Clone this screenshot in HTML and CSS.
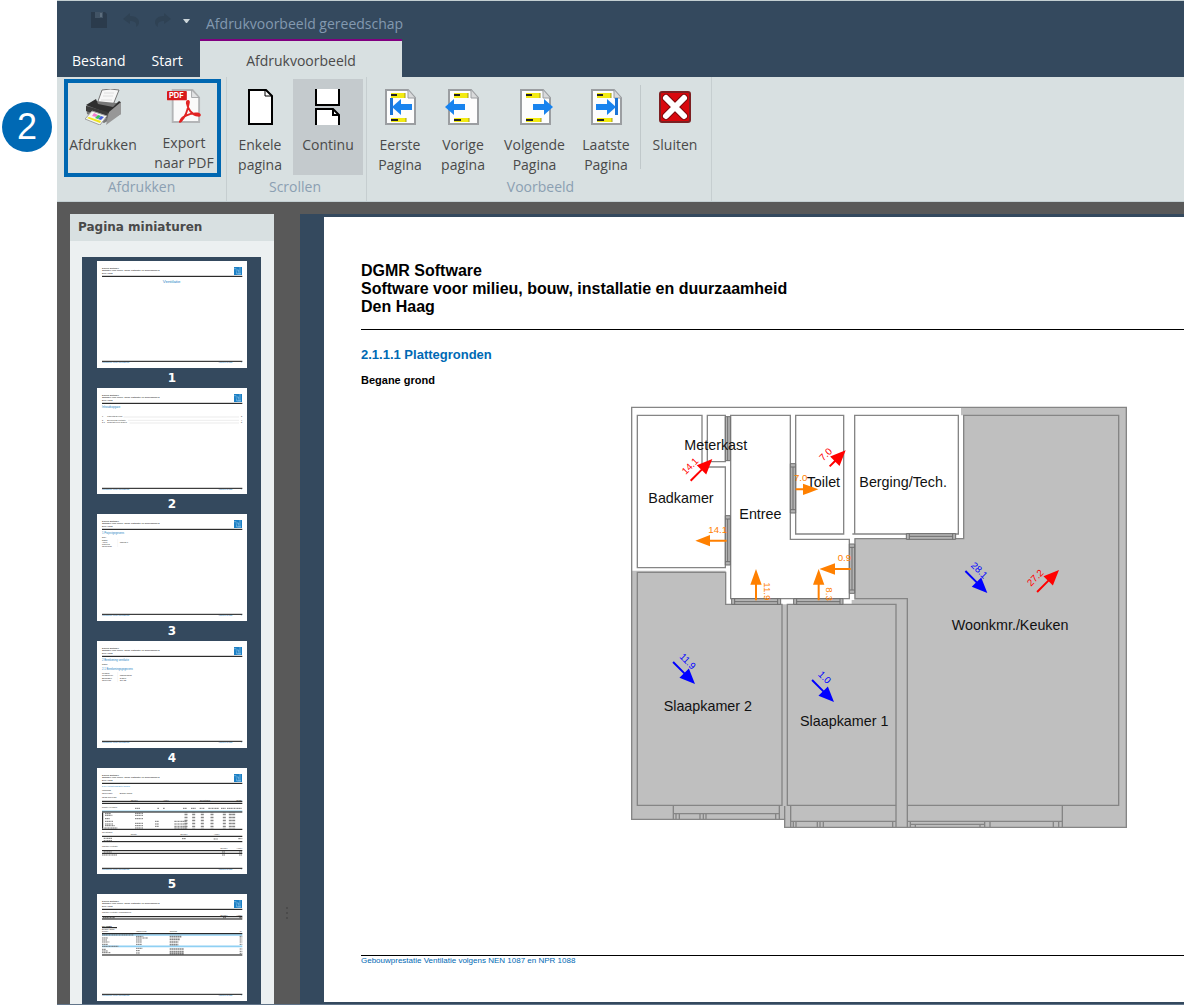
FILE: index.html
```html
<!DOCTYPE html>
<html lang="nl">
<head>
<meta charset="utf-8">
<meta name="viewport" content="width=device-width, initial-scale=1">
<title>Afdrukvoorbeeld</title>
<link rel="stylesheet" href="styles.css">
</head>
<body>
<svg class="defs" aria-hidden="true">
  <symbol id="logo" viewBox="0 0 24 24">
    <path fill="#1b7fc4" d="M0 0h24v24H0z"/>
    <path fill="none" stroke="#8fc6ea" stroke-width="2" d="M0 5h7M18 0v24M5 9h9v8M8 13v8h8M11 20h10"/>
  </symbol>
  <symbol id="sheet" viewBox="0 0 36 36">
    <path d="M5 1h22l7 8v26H5z" fill="#fdfdfd" stroke="#9b9ea1" stroke-width="2"/>
    <path d="M27 1v8h7" fill="#d9dadb" stroke="#9b9ea1"/>
    <path d="M10 4h14v5H10zM10 29h15v4H10z" fill="#f2ea12"/>
    <path d="M10 6h6M10 31h7" stroke="#222" stroke-width="2"/>
    <path d="M24 4v5M25 29v4" stroke="#a39b18" stroke-width="1"/>
  </symbol>
</svg>

<div class="stage">
  <aside class="step"><span class="step-badge">2</span></aside>

  <div class="app">
    <header class="titlebar">
      <div class="title-left">
        <div class="quick">
          <button type="button" aria-label="Opslaan"><svg width="16" height="16" viewBox="0 0 16 16"><path fill="#2b3b4c" d="M0 0h14l2 2v14H0z"/><path fill="#415365" d="M4 0h8v6H4z"/><path fill="#5d6e7e" d="M9 1h2v4H9z"/></svg></button>
          <button type="button" aria-label="Ongedaan maken"><svg width="16" height="16" viewBox="0 0 16 16"><path fill="#2f4254" d="M7 1v3c6 0 9 3 9 6 0 2-1 4-3 5 1-4-1-6-6-6v3L0 7z"/></svg></button>
          <button type="button" aria-label="Opnieuw"><svg width="16" height="16" viewBox="0 0 16 16"><path fill="#2f4254" d="M9 1v3c-6 0-9 3-9 6 0 2 1 4 3 5-1-4 1-6 6-6v3l7-5z"/></svg></button>
          <button type="button" class="quick-more" aria-label="Meer"><svg width="7" height="4" viewBox="0 0 7 4"><path fill="#cdd6da" d="M0 0h7L4 4H3z"/></svg></button>
        </div>
        <nav class="tabs">
          <button type="button">Bestand</button>
          <button type="button">Start</button>
        </nav>
      </div>
      <div class="context">
        <div class="context-title">Afdrukvoorbeeld gereedschap</div>
        <button type="button" class="context-tab">Afdrukvoorbeeld</button>
      </div>
    </header>

    <div class="ribbon">
      <section class="group group-print">
        <div class="marked">
          <button type="button" class="tool w70">
            <svg width="36" height="36" viewBox="0 0 36 36">
              <path d="M12 15 17 1q8-2 17 0l-6 15z" fill="#f7f7f7" stroke="#777"/>
              <path d="M19 4h10M18 7h10M16 11h11" stroke="#dedede"/>
              <path d="m1 17 10-5 20 2 6-1-1 12-17 9L2 25z" fill="#777"/>
              <path d="m1 16 10-6 2 5 15 3 6-6 3 2-12 11z" fill="#2f2f2f"/>
              <path d="m24 23 12-10v12L21 36z" fill="#979797"/>
              <path d="m1 17 22 6-1 6L1 22z" fill="#3b3b3b"/>
              <path d="m7 22 15 5-7 9L0 30z" fill="#f5f5f0" stroke="#a0a0a0"/>
              <path d="m2 29 13 5 1-2-12-4z" fill="#f0e51c"/>
              <path d="m9 24 4 2-2 2-4-1z" fill="#ef7fd0"/><path d="m13 26 3 1-3 3-3-1z" fill="#37c45a"/><path d="m16 27 3 1-3 3-3-1z" fill="#4a62dc"/>
            </svg>
            <span>Afdrukken</span>
          </button>
          <button type="button" class="tool w66">
            <svg width="36" height="36" viewBox="0 0 36 36">
              <path d="M6 1h21l7 8v26H6z" fill="#fafafa" stroke="#b3b5b7" stroke-width="2"/>
              <path d="M26 1v8h8z" fill="#e2e3e4" stroke="#a5a7a9"/>
              <rect x="0" y="2" width="21" height="10" rx="1" fill="#d81a1a"/>
              <text x="2" y="10" font-size="8" font-weight="700" fill="#fff" font-family="Inter, sans-serif">PDF</text>
              <path d="M14 34c1-4 9-9 19-8 3 1 2 3-1 2-6-1-10-7-11-13 0-3 3-3 2 0-1 7-4 15-8 19-1 1-2 1-1 0z" fill="none" stroke="#e12222" stroke-width="2"/>
            </svg>
            <span>Export naar PDF</span>
          </button>
        </div>
        <h2>Afdrukken</h2>
      </section>

      <section class="group group-scroll">
        <div class="tools">
          <button type="button" class="tool w66">
            <svg width="36" height="36" viewBox="0 0 36 36"><path d="M7 1h17l6 6v28H7z" fill="#fff" stroke="#000" stroke-width="2"/><path d="M23 1v6h6" fill="none" stroke="#000"/></svg>
            <span>Enkele pagina</span>
          </button>
          <button type="button" class="tool w70 active" aria-pressed="true">
            <svg width="36" height="36" viewBox="0 0 36 36"><path d="M6 0h23v16H6zM6 36V20h17l6 6v10z" fill="#fff"/><path d="M6 0v16h23V0M6 36V20h17l6 6v10M23 20v6h6" fill="none" stroke="#000" stroke-width="2"/></svg>
            <span>Continu</span>
          </button>
        </div>
        <h2>Scrollen</h2>
      </section>

      <section class="group group-view">
        <div class="tools">
          <button type="button" class="tool w60">
            <svg width="36" height="36" viewBox="0 0 36 36"><use href="#sheet" x="-1" width="36" height="36"/><path d="M8 9h3v17H8z" fill="#1b74d6"/><path d="m10 18 9-8v5h11v6H19v5z" fill="#1883ee"/></svg>
            <span>Eerste Pagina</span>
          </button>
          <button type="button" class="tool w66">
            <svg width="36" height="36" viewBox="0 0 36 36"><use href="#sheet" x="-1" width="36" height="36"/><path d="m0 18 9-8v5h11v6H9v5z" fill="#1883ee"/></svg>
            <span>Vorige pagina</span>
          </button>
          <button type="button" class="tool w77">
            <svg width="36" height="36" viewBox="0 0 36 36"><use href="#sheet" x="-1" width="36" height="36"/><path d="m36 18-9-8v5H16v6h11v5z" fill="#1883ee"/></svg>
            <span>Volgende Pagina</span>
          </button>
          <button type="button" class="tool w66">
            <svg width="36" height="36" viewBox="0 0 36 36"><use href="#sheet" x="-1" width="36" height="36"/><path d="M27 9h3v17h-3z" fill="#1b74d6"/><path d="m28 18-9-8v5H8v6h11v5z" fill="#1883ee"/></svg>
            <span>Laatste Pagina</span>
          </button>
          <span class="rule"></span>
          <button type="button" class="tool w66">
            <svg width="36" height="36" viewBox="0 0 36 36"><rect x="3" y="3" width="30" height="30" rx="2" fill="#d9080d" stroke="#7c2022" stroke-width="2"/><path d="m9 9 18 18M27 9 9 27" stroke="#7e0b0d" stroke-width="8" stroke-linecap="round"/><path d="m9 9 18 18M27 9 9 27" stroke="#fff" stroke-width="6" stroke-linecap="round"/></svg>
            <span>Sluiten</span>
          </button>
        </div>
        <h2>Voorbeeld</h2>
      </section>
    </div>

    <div class="workspace">
      <aside class="panel">
        <h2>Pagina miniaturen</h2>
        <ol class="thumbs">
          <li><svg viewBox="0 0 450 320">
            <g id="thumb-head">
              <g font-size="7" fill="#000">
                <text x="15" y="24">DGMR Software</text>
                <text x="15" y="31">Software voor milieu, bouw, installatie en duurzaamheid</text>
                <text x="15" y="38">Den Haag</text>
              </g>
              <use href="#logo" x="411" y="18" width="24" height="24"/>
              <path stroke="#000" stroke-width="3" d="M15 46h421"/>
            </g>
            <text x="224" y="66" text-anchor="middle" font-size="13" fill="#1b7fc4">Ventilatie</text>
            <g id="thumb-foot">
              <path stroke="#111" stroke-width="3" d="M15 301h421"/>
              <g font-size="4" fill="#0069b4">
                <text x="15" y="306">Gebouwprestatie Ventilatie volgens NEN 1087</text>
                <text x="364" y="306">Afgedrukt op 12-3-2021</text>
                <text x="432" y="306">1</text>
              </g>
            </g></svg><span>1</span></li>
          <li><svg viewBox="0 0 450 320"><use href="#thumb-head"/>
            <text x="15" y="60" font-size="8" fill="#1b7fc4">Inhoudsopgave</text>
            <g font-size="6" fill="#222"><text x="15" y="86">1</text><text x="31" y="86">Projectgegevens</text><text x="432" y="86">3</text>
            <text x="15" y="98">2</text><text x="31" y="98">Berekening ventilatie</text><text x="432" y="98">4</text>
            <text x="15" y="105">2.1</text><text x="31" y="105">Resultaten per gebied</text><text x="432" y="105">5</text></g>
            <path stroke="#aaa" stroke-dasharray="2 1" d="M80 87h346M94 97h332M98 105h328"/>
            <use href="#thumb-foot"/></svg><span>2</span></li>
          <li><svg viewBox="0 0 450 320"><use href="#thumb-head"/>
            <text x="15" y="61" font-size="8" fill="#1b7fc4">1 Projectgegevens</text>
            <g font-size="6" fill="#222"><text x="15" y="72">Doel</text><text x="15" y="81">Naam</text><text x="15" y="86">Adres</text><text x="15" y="92">Projectnr</text><text x="15" y="98">Opmerking</text><text x="68" y="86">Woning 1</text></g>
            <path stroke="#aaa" stroke-dasharray="1 2" d="M62 76v23"/>
            <use href="#thumb-foot"/></svg><span>3</span></li>
          <li><svg viewBox="0 0 450 320"><use href="#thumb-head"/>
            <g font-size="8" fill="#1b7fc4"><text x="15" y="61">2 Berekening ventilatie</text><text x="15" y="86">2.1 Berekeningsgegevens</text></g>
            <g font-size="6" fill="#222"><text x="15" y="73">Naam</text><text x="15" y="98">Gebouw</text><text x="15" y="106">Gebouwtype</text><text x="15" y="113">Bouwlagen</text><text x="15" y="121">Oppervlak</text><text x="68" y="106">Woongebouw</text><text x="68" y="113">2 lagen</text><text x="68" y="119">116 m2</text></g>
            <path stroke="#aaa" stroke-dasharray="1 2" d="M62 95v28"/>
            <use href="#thumb-foot"/></svg><span>4</span></li>
          <li><svg viewBox="0 0 450 320"><use href="#thumb-head"/>
            <text x="15" y="58" font-size="6" fill="#1b7fc4">2.1.1 Ventilatiecapaciteit gebied</text>
            <g font-size="6" fill="#222"><text x="15" y="69">Woonlaag</text><text x="15" y="77">Oppervlakte</text><text x="68" y="77">Begane grond</text><text x="15" y="91">Totaal oppervlak</text>
            <text x="101" y="98">Toevoer</text><text x="198" y="98">Afvoer</text><text x="308" y="98">Overstroom</text><text x="418" y="98">Totaal</text>
            <text x="15" y="119">Ruimte en functie</text><text x="15" y="196">Overstroom</text><text x="101" y="200">Ruimte</text><text x="250" y="200">Toevoer</text><text x="350" y="200">Afvoer</text>
            <text x="15" y="237">Controle ventilatie</text><text x="370" y="243">Toevoer</text><text x="418" y="243">Afvoer</text></g>
            <g stroke="#777" stroke-width="3" stroke-dasharray="5 1 3 1"><path d="M114 121h16M181 121h6M198 121h6M258 121h12M282 121h14M308 121h14M334 121h32M372 121h14M390 121h44"/>
            <path d="M24 137h18M24 142h22M24 152h14M24 160h24M24 168h24M24 173h30M22 180h40"/>
            <path d="M114 136h24M114 142h24M114 152h24M114 166h24M114 173h24M114 180h24M174 160h12M174 168h12M174 175h12M232 160h38M232 168h38M232 175h38M232 180h38"/>
            <path d="M20 211h26M20 218h26M255 212h12M350 213h12M424 212h12M20 252h24M375 252h10M426 252h10M15 261h46M375 261h10M426 261h10"/></g>
            <path stroke="#888" stroke-width="9" stroke-dasharray="2 2 3 2" fill="none" d="M267 134v48M290 134v48M316 134v48M345 134v48M382 134v48M400 134v48M410 134v48"/>
            <path stroke="#65bfe9" stroke-width="2" d="M15 129h421"/>
            <path stroke="#000" stroke-width="3" fill="none" d="M15 100h421M15 106h421M15 132h421M17 134v48M15 184h421M15 205h421M15 221h421M15 248h421M15 256h421"/>
            <use href="#thumb-foot"/></svg><span>5</span></li>
          <li><svg viewBox="0 0 450 320"><use href="#thumb-head"/>
            <g font-size="6" fill="#222"><text x="15" y="58">Controle ventilatie verblijfsgebied</text><text x="370" y="65">Toevoer</text><text x="418" y="65">Afvoer</text>
            <text x="15" y="99" font-weight="700" fill="#000">Per ruimte</text><text x="15" y="109">Begane grond</text><text x="15" y="115">Ruimte</text><text x="117" y="115">Voorziening</text><text x="218" y="115">Richting</text><text x="428" y="115">qv</text></g>
            <path stroke="#8fd0f3" stroke-width="5" d="M15 123h421M15 157h421"/>
            <g stroke="#777" stroke-width="3" stroke-dasharray="5 1 3 1"><path d="M18 71h36M378 71h9M427 71h9M15 123h94M15 132h18M15 138h16M15 144h22M15 151h18M15 157h50M15 166h12M15 171h18M15 176h26M117 127h22M117 132h36M117 138h18M117 144h18M117 151h18M117 163h20M117 170h12M117 177h12M428 127h8M428 132h8M428 138h8M428 144h8M428 151h8M428 165h8M428 172h8M428 178h8"/></g>
            <path stroke="#888" stroke-width="5" stroke-dasharray="6 1 4 1" d="M218 128h36M218 136h30M218 144h26M218 152h26M218 165h42M218 173h42M218 179h42"/>
            <path stroke="#000" stroke-width="3" d="M15 68h421M15 75h421M15 119h421M15 183h421M15 101h45"/>
            <use href="#thumb-foot"/></svg><span>6</span></li>
        </ol>
      </aside>

      <div class="splitter"><i></i><i></i><i></i></div>

      <main class="viewer">
        <article class="sheet">
          <header class="sheet-head">DGMR Software<br>Software voor milieu, bouw, installatie en duurzaamheid<br>Den Haag</header>
          <h1>2.1.1.1 Plattegronden</h1>
          <h3>Begane grond</h3>
          <svg class="plan" width="498" height="424" viewBox="0 0 1494 1272" role="img" aria-label="Plattegrond begane grond">
            <path class="floor" d="M993 7h496v1260H464v-24H5V497h282v101h378v-13h8V401h327V31h-7z"/>
            <g class="wall">
              <path d="M5 7h1484v1260H464v-24H5z"/>
              <path d="M22 31h194v155h70v302H22zM232 31h54v139h-54zM302 31h179v372h177v178H302zM497 31h144v356H497zM674 387V31h311v356H667"/>
              <path d="M1001 31h465v1170H832V581H675V401h326z"/>
              <path d="M22 502h265v96h169v603H22zM472 598h326v603H472z"/>
              <path d="M464 1203v40M130 1202v41M448 1202v41M130 1226h318M138 1226v17M148 1226v17M210 1226v17M220 1226v17M228 1226v17M437 1226v17"/>
              <path d="M482 1202v65M798 1202v65M482 1249h316M490 1249v18M498 1249v18M562 1249v18M570 1249v18M580 1249v18M788 1249v18"/>
              <path d="M832 1202v65M1297 1202v65M832 1249h465M841 1249v18M856 1258v9M841 1258h223M1050 1258v9M1064 1249v18M1080 1249v18M1270 1249v18M1286 1249v18"/>
            </g>
            <g class="opening">
              <path d="M286 35h15v132h-15zM286 332h15v148h-15zM481 176h16v148h-16zM658 417h16v148h-16zM305 581h147v17H305zM491 581h148v17H491zM829 386h148v17H829z"/>
              <path d="M286 342h15M286 470h15M481 186h16M481 314h16M658 427h16M658 555h16M314 581v17M443 581v17M500 581v17M630 581v17M838 386v17M968 386v17"/>
              <path d="M293 35v132M293 342v128M489 186v128M666 427v128M314 590h129M500 590h130M838 394h130"/>
            </g>
            <g class="room">
              <text x="163" y="136">Meterkast</text>
              <text x="55" y="295">Badkamer</text>
              <text x="328" y="342">Entree</text>
              <text x="530" y="245">Toilet</text>
              <text x="688" y="245">Berging/Tech.</text>
              <text x="965" y="676">Woonkmr./Keuken</text>
              <text x="101" y="917">Slaapkamer 2</text>
              <text x="510" y="963">Slaapkamer 1</text>
            </g>
            <g class="flow pass">
              <path transform="translate(196 407) rotate(180)" d="M-94-3h50v-14L0 0l-44 17V3h-50z"/><text x="235" y="384">14.1</text>
              <path transform="translate(565 253)" d="M-68-3h22v-14L0 0l-46 17V3h-22z"/><text x="492" y="228">7.0</text>
              <path transform="translate(568 492) rotate(180)" d="M-94-3h47v-14L0 0l-47 17V3h-47z"/><text x="623" y="469">0.9</text>
              <path transform="translate(378 492) rotate(-90)" d="M-94-3h47v-14L0 0l-47 17V3h-47z"/><text transform="translate(403 532) rotate(90)">11.9</text>
              <path transform="translate(566 492) rotate(-90)" d="M-94-3h47v-14L0 0l-47 17V3h-47z"/><text transform="translate(589 547) rotate(90)">8.3</text>
            </g>
            <g class="flow out">
              <path transform="translate(247 162) rotate(-45)" d="M-92-3h46v-17L0 0l-46 20V3h-46z"/><text class="mid" transform="translate(187 190) rotate(-45)">14.1</text>
              <path transform="translate(647 136) rotate(-45)" d="M-68-3h22v-17L0 0l-46 20V3h-22z"/><text class="mid" transform="translate(594 155) rotate(-45)">7.0</text>
              <path transform="translate(1287 495) rotate(-45)" d="M-93-3h47v-17L0 0l-46 20V3h-47z"/><text class="mid" transform="translate(1223 525) rotate(-45)">27.2</text>
            </g>
            <g class="flow in">
              <path transform="translate(1072 564) rotate(45)" d="M-93-3h47v-17L0 0l-46 20V3h-47z"/><text class="mid" transform="translate(1041 503) rotate(45)">28.1</text>
              <path transform="translate(195 837) rotate(45)" d="M-93-3h47v-17L0 0l-46 20V3h-47z"/><text class="mid" transform="translate(166 776) rotate(45)">11.9</text>
              <path transform="translate(612 891) rotate(45)" d="M-93-3h47v-17L0 0l-46 20V3h-47z"/><text class="mid" transform="translate(577 824) rotate(45)">1.0</text>
            </g>
          </svg>
          <footer class="sheet-foot">Gebouwprestatie Ventilatie volgens NEN 1087 en NPR 1088</footer>
        </article>
      </main>
    </div>
  </div>
</div>
</body>
</html>
```
FILE: styles.css
```css
* { box-sizing: border-box; }
body {
  margin: 0;
  background: #fff;
  font-family: "Open Sans", "Noto Sans", sans-serif;
  font-size: 14px;
  line-height: 20px;
  color: #4a4a4a;
}
h1, h2, h3, ol { margin: 0; padding: 0; }
button {
  border: 0;
  padding: 0;
  background: none;
  font: inherit;
  color: inherit;
}
svg { display: block; }
.defs { position: absolute; width: 0; height: 0; }

.stage { display: flex; height: 100vh; padding-right: 1px; }
.step { flex: 0 0 57px; padding: 102px 0 0 2px; }
.step-badge {
  display: flex;
  align-items: center;
  justify-content: center;
  width: 50px;
  height: 50px;
  border-radius: 50%;
  background: #0069b4;
  color: #fff;
  font: 36px/50px "Liberation Sans", Arial, sans-serif;
}
.app {
  flex: 1;
  min-width: 0;
  display: flex;
  flex-direction: column;
  background: #595959;
  border-top: 1px solid #c3cfd2;
}

/* title bar with quick access and tabs */
.titlebar { display: flex; flex: none; background: #34495e; }
.title-left { width: 143px; }
.quick { display: flex; gap: 16px; height: 40px; padding: 11px 0 0 34px; align-items: flex-start; }
.quick-more { padding-top: 7px; margin-left: -4px; }
.tabs { display: flex; gap: 26px; height: 36px; padding: 4px 0 0 15px; color: #fff; }
.context { width: 202px; }
.context-title {
  height: 40px;
  padding: 13px 0 0 6px;
  border-bottom: 2px solid #800080;
  color: #8399b0;
  white-space: nowrap;
}
.context-tab {
  display: block;
  width: 100%;
  height: 36px;
  padding-top: 4px;
  background: #d8e0e1;
}

/* ribbon */
.ribbon { display: flex; flex: none; background: #d8e0e1; border-bottom: 1px solid #c3cfd2; }
.group {
  display: flex;
  flex-direction: column;
  padding-top: 2px;
  height: 124px;
  border-right: 1px solid #c6ced0;
}
.group h2 {
  margin-top: auto;
  padding-bottom: 4px;
  text-align: center;
  font-size: 14px;
  font-weight: 400;
  color: #8b9fb2;
}
.group-print { width: 170px; padding-left: 7px; }
.group-print h2 { padding-right: 7px; }
.group-scroll { width: 140px; padding: 2px 3px 0 0; }
.group-view { width: 345px; padding-left: 3px; }
.marked {
  display: flex;
  gap: 13px;
  width: 157px;
  height: 98px;
  border: 4px solid #0067b1;
}
.tools { display: flex; height: 96px; }
.tool {
  display: flex;
  flex-direction: column;
  align-items: center;
  gap: 10px;
  padding-top: 10px;
  text-align: center;
}
.marked .tool { padding-top: 6px; }
.w60 { width: 60px; }
.w66 { width: 66px; }
.w70 { width: 70px; }
.w77 { width: 77px; }
.active { background: #c4cacd; }
.rule { width: 1px; margin: 6px 1px; background: #c0c8ca; }

/* workspace */
.workspace {
  flex: 1;
  min-height: 0;
  display: flex;
  padding: 12px 0 0 13px;
  border-bottom: 1px solid #62758a;
}
.panel {
  flex: 0 0 204px;
  display: flex;
  flex-direction: column;
  background: #ecf0f1;
}
.panel h2 {
  flex: none;
  height: 27px;
  padding-left: 8px;
  background: #d8e0e1;
  font: 700 12px/27px "DejaVu Sans", Verdana, sans-serif;
}
.thumbs {
  flex: 1;
  min-height: 0;
  overflow-y: auto;
  scrollbar-width: none;
  margin: 16px 13px 0 12px;
  padding: 4px 14px 0 15px;
  background: #34495e;
  list-style: none;
  color: #fff;
  font: 700 12px/20px "DejaVu Sans", Verdana, sans-serif;
  text-align: center;
}
.thumbs svg {
  width: 100%;
  background: #fff;
  font-family: "Liberation Sans", Arial, sans-serif;
  font-weight: 400;
}
.thumbs span { display: block; }
.splitter {
  flex: 0 0 26px;
  display: flex;
  flex-direction: column;
  align-items: center;
  justify-content: flex-end;
  gap: 3px;
  padding-bottom: 85px;
}
.splitter i { width: 2px; height: 2px; background: #4b4b4b; }

.viewer {
  flex: 1;
  min-width: 0;
  overflow: auto;
  scrollbar-width: none;
  padding: 3px 0 2px 24px;
  background: #34495e;
}
.sheet {
  display: flex;
  flex-direction: column;
  width: 1110px;
  min-height: 100%;
  padding: 45px 37px 36px;
  background: #fff;
  color: #000;
  font-family: "Liberation Sans", Arial, sans-serif;
}
.sheet-head {
  padding-bottom: 13px;
  border-bottom: 1px solid #000;
  font-size: 16px;
  line-height: 18px;
  font-weight: 700;
}
.sheet h1 { margin-top: 15px; font-size: 13px; line-height: 20px; color: #0069b4; }
.sheet h3 { margin-top: 8px; font-size: 11px; line-height: 14px; }
.plan { align-self: center; margin-top: 18px; }
.sheet-foot {
  margin-top: auto;
  border-top: 1px solid #000;
  font-size: 8px;
  line-height: 10px;
  color: #0069b4;
}

/* floor plan */
.floor { fill: #bfbfbf; }
.wall { fill: none; stroke: #858585; stroke-width: 4; }
.opening { fill: #b4b4b4; stroke: #6e6e6e; stroke-width: 3; }
.room { font-size: 43px; fill: #111; }
.flow { font-size: 29px; }
.mid { text-anchor: middle; }
.pass { fill: #ff8000; }
.out { fill: #f00; }
.in { fill: #00f; }
```
